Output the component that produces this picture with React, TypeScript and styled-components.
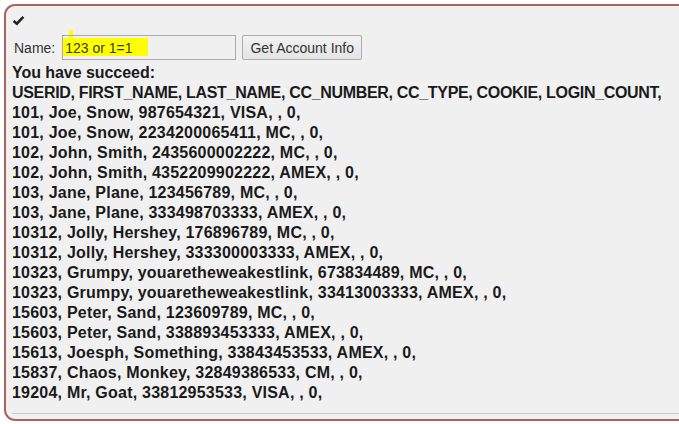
import React from 'react';
import styled, { createGlobalStyle } from 'styled-components';

const rows = [
  '101, Joe, Snow, 987654321, VISA, , 0,',
  '101, Joe, Snow, 2234200065411, MC, , 0,',
  '102, John, Smith, 2435600002222, MC, , 0,',
  '102, John, Smith, 4352209902222, AMEX, , 0,',
  '103, Jane, Plane, 123456789, MC, , 0,',
  '103, Jane, Plane, 333498703333, AMEX, , 0,',
  '10312, Jolly, Hershey, 176896789, MC, , 0,',
  '10312, Jolly, Hershey, 333300003333, AMEX, , 0,',
  '10323, Grumpy, youaretheweakestlink, 673834489, MC, , 0,',
  '10323, Grumpy, youaretheweakestlink, 33413003333, AMEX, , 0,',
  '15603, Peter, Sand, 123609789, MC, , 0,',
  '15603, Peter, Sand, 338893453333, AMEX, , 0,',
  '15613, Joesph, Something, 33843453533, AMEX, , 0,',
  '15837, Chaos, Monkey, 32849386533, CM, , 0,',
  '19204, Mr, Goat, 33812953533, VISA, , 0,',
];

const App = () => (
  <>
    <GlobalStyle />
    <Panel>
      <Check viewBox="0 0 16 16">
        <path d="M2 8.5 L6 12 L14 3.5" />
      </Check>
      <Form>
        <Label>Name:</Label>
        <InputWrap>
          <Highlight />
          <Tick />
          <Input defaultValue="123 or 1=1" />
        </InputWrap>
        <Button>Get Account Info</Button>
      </Form>
      <Output>
        <Line $spacing={-0.05}>You have succeed:</Line>
        <Line $spacing={-0.32}>USERID, FIRST_NAME, LAST_NAME, CC_NUMBER, CC_TYPE, COOKIE, LOGIN_COUNT,</Line>
        {rows.map((r, i) => (
          <Line key={i}>{r}</Line>
        ))}
      </Output>
      <Rule />
    </Panel>
  </>
);

const GlobalStyle = createGlobalStyle`
  html, body {
    margin: 0;
    background: #fff;
    overflow: hidden;
  }
`;

const Panel = styled.div`
  margin: 4px -20px 0 4px;
  width: 700px;
  padding: 8px 0 0 6px;
  background: #f0f0f0;
  border: 2px solid #a96363;
  border-radius: 11px;
  font-family: 'Liberation Sans', Arial, sans-serif;
  color: #222;
  box-sizing: border-box;
`;

const Check = styled.svg`
  display: block;
  width: 13px;
  height: 13px;
  fill: none;
  stroke: #222;
  stroke-width: 3.2;
`;

const Form = styled.div`
  display: flex;
  align-items: center;
  margin-top: 8px;
  height: 25px;
`;

const Label = styled.span`
  font-size: 14px;
  color: #333;
  margin: 0 7px 0 2px;
`;

const InputWrap = styled.div`
  position: relative;
  width: 174px;
  height: 25px;
`;

const Input = styled.input`
  position: relative;
  width: 100%;
  height: 100%;
  box-sizing: border-box;
  border: 1px solid #a9a9a9;
  background: transparent;
  padding: 1px 2px 0 2px;
  font-family: 'Liberation Sans', Arial, sans-serif;
  font-size: 14px;
  color: #3a3a00;
  outline: none;
`;

const Highlight = styled.div`
  position: absolute;
  left: 0;
  top: 3px;
  width: 86px;
  height: 18px;
  background: #ffff00;
`;

const Tick = styled.div`
  position: absolute;
  left: 7px;
  top: -5px;
  width: 4px;
  height: 8px;
  background: #ffff00;
`;

const Button = styled.button`
  margin-left: 6px;
  height: 25px;
  width: 120px;
  padding: 0;
  border: 1px solid #adadad;
  border-radius: 2px;
  background: linear-gradient(#f2f2f2, #e4e4e4);
  font-family: 'Liberation Sans', Arial, sans-serif;
  font-size: 14px;
  color: #333;
`;

const Output = styled.div`
  margin-top: 3px;
`;

const Line = styled.div<{ $spacing?: number }>`
  font-size: 16px;
  font-weight: bold;
  line-height: 20px;
  letter-spacing: ${(p) => (p.$spacing ?? 0.22)}px;
  color: #1a1a1a;
  white-space: nowrap;
`;

const Rule = styled.div`
  margin: 10px 0 5px 0;
  border-top: 1px solid #c8c8c8;
`;

export default App;
